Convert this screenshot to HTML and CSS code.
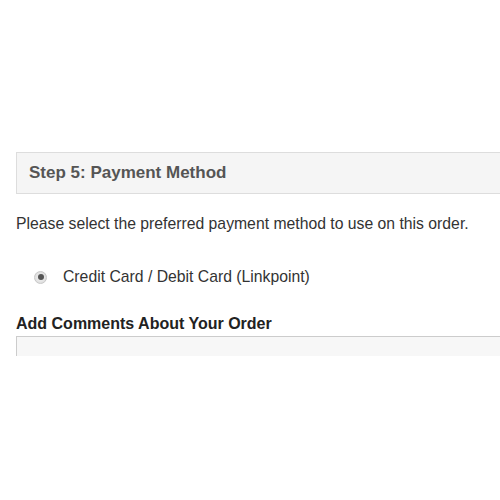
FILE: index.html
```html
<!DOCTYPE html>
<html lang="en">
<head>
  <meta charset="UTF-8">
  <title>Checkout - Payment Method</title>
  <link rel="stylesheet" href="styles.css">
</head>
<body>
<main class="checkout">
  <div class="step-heading">Step 5: Payment Method</div>
  <p class="step-note">Please select the preferred payment method to use on this order.</p>
  <label class="pay-option">
    <span class="radio checked"></span>
    Credit Card / Debit Card (Linkpoint)
  </label>
  <h3 class="comments-title">Add Comments About Your Order</h3>
  <div class="comments-box"></div>
</main>
</body>
</html>
```

FILE: styles.css
```css
body {
  margin: 0;
  background: #fff;
  font-family: "Liberation Sans", Arial, sans-serif;
  color: #333;
  overflow: hidden;
}
.checkout {
  padding: 152px 0 0 16px;
}
.step-heading {
  height: 40px;
  line-height: 40px;
  padding-left: 12px;
  background: #f5f5f5;
  border: 1px solid #ddd;
  border-right: none;
  color: #555;
  font-weight: bold;
  font-size: 17px;
}
.step-note {
  margin: 21px 0 0;
  font-size: 15.75px;
  line-height: 18px;
}
.pay-option {
  display: flex;
  align-items: center;
  gap: 16px;
  margin: 35px 0 0 18px;
  font-size: 15.75px;
  line-height: 18px;
}
.radio {
  width: 11px;
  height: 11px;
  border-radius: 50%;
  background: radial-gradient(circle, #e8e8e8 40%, #d6d6d6 100%);
  border: 1px solid #c8c8c8;
  display: flex;
  align-items: center;
  justify-content: center;
}
.radio.checked::after {
  content: "";
  width: 6px;
  height: 6px;
  border-radius: 50%;
  background: #555;
}
.comments-title {
  margin: 29px 0 0;
  font-size: 16px;
  line-height: 18px;
  color: #222;
}
.comments-box {
  height: 19px;
  margin-top: 3px;
  background: #f7f7f7;
  border: 1px solid #ccc;
  border-right: none;
  border-bottom: none;
}
```
